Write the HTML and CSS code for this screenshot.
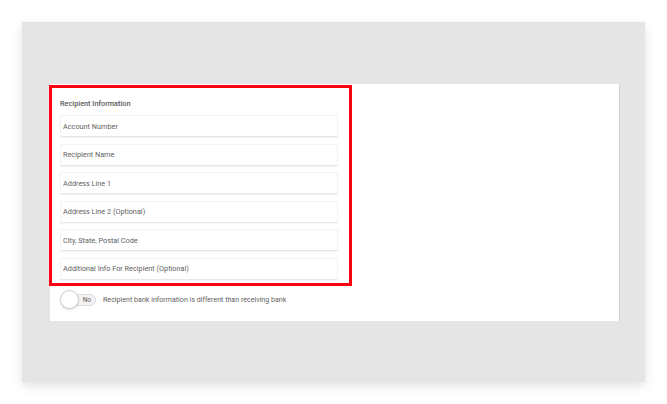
FILE: index.html
```html
<!DOCTYPE html>
<html>
<head>
    <title>Recipient Information</title>
    <link rel="stylesheet" href="styles.css">
</head>
<body>
    <div class="panel">
        <div class="card">
            <div class="section">
                <h3 class="section-title">Recipient Information</h3>
                <div class="fields">
                    <input type="text" class="field" placeholder="Account Number">
                    <input type="text" class="field" placeholder="Recipient Name">
                    <input type="text" class="field" placeholder="Address Line 1">
                    <input type="text" class="field" placeholder="Address Line 2 (Optional)">
                    <input type="text" class="field" placeholder="City, State, Postal Code">
                    <input type="text" class="field" placeholder="Additional Info For Recipient (Optional)">
                </div>
            </div>

            <div class="toggle-row">
                <div class="toggle">
                    <span class="knob"></span>
                    <span class="toggle-text">No</span>
                </div>
                <span class="toggle-label">Recipient bank information is different than receiving bank</span>
            </div>
        </div>
    </div>
</body>
</html>
```

FILE: styles.css
```css
body {
    margin: 0;
    padding: 22px;
    background: #fff;
    font-family: Roboto, "Liberation Sans", Arial, sans-serif;
    color: #555;
}
.panel {
    width: 623px;
    height: 360px;
    box-sizing: border-box;
    padding: 62px 25px 0 28px;
    background: #e5e5e5;
    box-shadow: 0 4px 10px rgba(0, 0, 0, 0.12);
}
.card {
    height: 237px;
    box-sizing: border-box;
    background: #fff;
    border-right: 1px solid #cfcfcf;
    padding: 1px 10px 0 0;
}
.section {
    width: 303px;
    box-sizing: border-box;
    margin-left: -1px;
    border: 3px solid #ff0012;
    padding: 11px 11px 3px 8px;
}
.section-title {
    margin: 0 0 6px 0;
    font-size: 7.3px;
    line-height: 10px;
    font-weight: 500;
    color: #5a5a5a;
}
.fields {
    display: flex;
    flex-direction: column;
    gap: 6.6px;
}
.field {
    display: block;
    width: 100%;
    height: 22px;
    box-sizing: border-box;
    margin: 0;
    padding: 0 2px;
    border: 1px solid #f3f3f3;
    border-bottom-color: #e8e8e8;
    box-shadow: 0 1px 1px rgba(0, 0, 0, 0.04);
    background: #fff;
    font-family: inherit;
    font-size: 7.3px;
    color: #5f5f5f;
    outline: none;
}
.field::placeholder {
    color: #5f5f5f;
}
.toggle-row {
    display: flex;
    align-items: center;
    height: 20px;
    margin: 4px 0 0 10px;
}
.toggle {
    position: relative;
    width: 35px;
    height: 12px;
    box-sizing: border-box;
    margin-left: 1px;
    border: 1px solid #dcdcdc;
    border-radius: 6px;
    background: #f4f4f4;
    display: flex;
    align-items: center;
    justify-content: flex-end;
    padding-right: 4px;
}
.knob {
    position: absolute;
    left: -2px;
    top: -5px;
    width: 19px;
    height: 19px;
    box-sizing: border-box;
    border: 1px solid #cfcfcf;
    border-radius: 50%;
    background: #fff;
    box-shadow: 0 1px 2px rgba(0, 0, 0, 0.15);
}
.toggle-text {
    font-size: 6.5px;
    color: #5f5f5f;
}
.toggle-label {
    margin-left: 7px;
    font-size: 7.1px;
    color: #5f5f5f;
}
```
